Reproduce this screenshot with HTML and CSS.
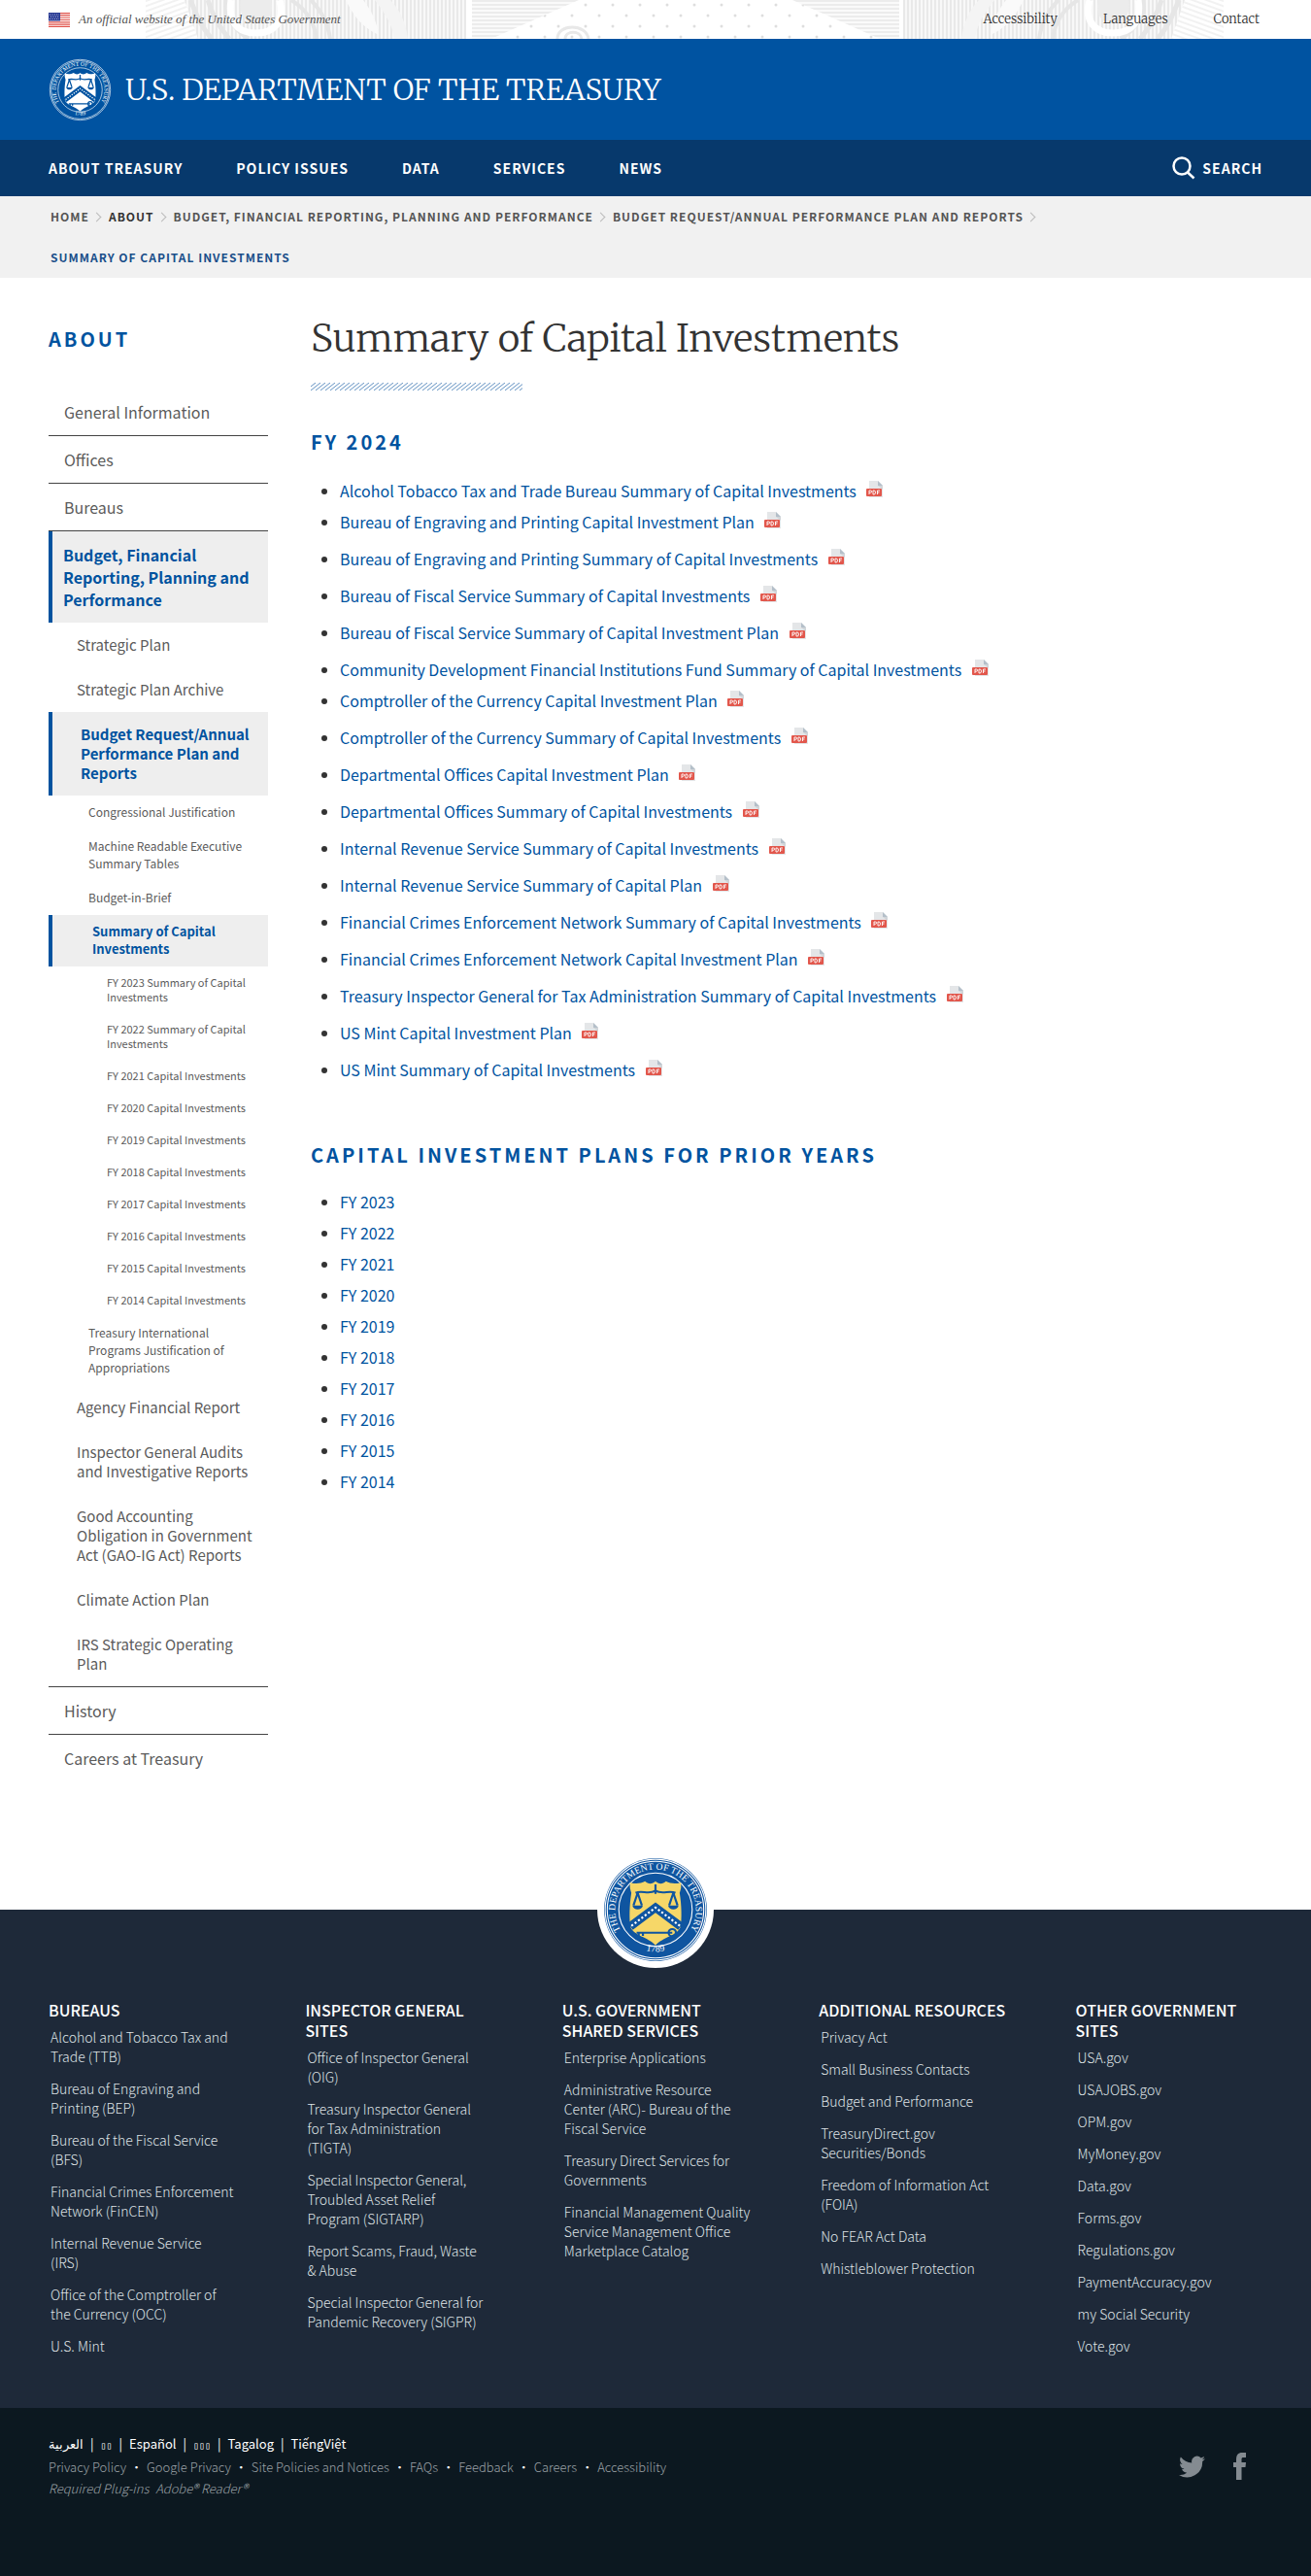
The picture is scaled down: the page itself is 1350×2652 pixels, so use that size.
FILE: index.html
```
<!DOCTYPE html>
<html lang="en">
<head>
<meta charset="utf-8">
<meta name="viewport" content="width=device-width, initial-scale=1">
<title>Summary of Capital Investments | U.S. Department of the Treasury</title>
<link rel="stylesheet" href="styles.css">
</head>
<body>
<svg class="sprite" aria-hidden="true">
  <symbol id="seal-rings" viewBox="0 0 100 100">
    <circle class="seal-disc" cx="50" cy="50" r="49"/>
    <circle class="seal-ring" cx="50" cy="50" r="48"/>
    <circle class="seal-ring" cx="50" cy="50" r="46"/>
    <circle class="seal-ring" cx="50" cy="50" r="35"/>
    <path class="seal-shield" d="M50 23c-3 3-7 3-10 0-4 2-9 3-14 1-1 4 0 7 1 10-2 12-2 25-1 32 3 9 17 10 24 18 7-8 21-9 24-18 1-7 1-20-1-32 1-3 2-6 1-10-5 2-10 1-14-1-3 3-7 3-10 0z"/>
    <path class="seal-mark" d="M50 26v9M31 34c6-3 12 2 19-2 7 4 13-1 19 2M33 34l-4 12M33 34l4 12M67 34l-4 12M67 34l4 12M32 72h34M34 72v4M38 72v3"/>
    <path class="seal-fill" d="M28 46h10c-1 5-9 5-10 0zM62 46h10c-1 5-9 5-10 0z"/>
    <circle class="seal-mark" cx="66" cy="72" r="3.500"/>
    <path class="seal-band" d="M26 66L50 48l24 18"/>
    <path class="seal-stars" d="M27 65.500L50 48l24 18"/>
  </symbol>
  <symbol id="pdf" viewBox="0 0 18 18">
    <path d="M3 0h9l5 5v12H3z" fill="#e4e6e8"/>
    <path d="M12 0l5 5h-5z" fill="#b4bfc9"/>
    <path d="M12 5h5v4z" fill="#d0d4d8"/>
    <rect x="0" y="8" width="16" height="8" rx="1" fill="#e2574c"/>
    <path d="M3 14v-4h1.500a1 1 0 0 1 0 2.200H3M7 10v4h1q1.500 0 1.500-2T8 10zM11.500 14v-4H14M11.500 12h2" fill="none" stroke="#fff" stroke-width=".9"/>
  </symbol>
</svg>

<header>
  <div class="topbar">
    <svg class="engraving" viewBox="0 0 1120 40" preserveAspectRatio="xMidYMid slice" aria-hidden="true">
      <defs>
        <pattern id="v-lines" width="4" height="4" patternUnits="userSpaceOnUse"><path d="M0 0h4v4H0z" fill="#f8f8f8"/><path d="M1 0v4" stroke="#dadada"/></pattern>
        <pattern id="h-lines" width="4" height="4" patternUnits="userSpaceOnUse"><path d="M0 0h4v4H0z" fill="#fafafa"/><path d="M0 1h4" stroke="#dedede"/></pattern>
        <pattern id="d-lines" width="5" height="5" patternUnits="userSpaceOnUse" patternTransform="rotate(-20)"><path d="M0 1h5" stroke="#e4e4e4"/></pattern>
        <pattern id="dots" width="28" height="22" patternUnits="userSpaceOnUse"><circle cx="5" cy="5" r="1.500" fill="#dedede"/><circle cx="19" cy="16" r="1.500" fill="#dedede"/></pattern>
        <g id="scroll">
          <path d="M0 0h40l14 40H0z" fill="url(#d-lines)"/>
          <path d="M40 0h290v40H54z" fill="url(#v-lines)"/>
          <path d="M46 0c6 14 10 26 22 40M64 0c4 14 12 28 22 40M84 0c-6 14 8 30 22 40" fill="none" stroke="#e6e6e6" stroke-width="5"/>
          <path d="M88 0c-4 24 8 34 26 34s30-12 24-34" fill="none" stroke="#fff" stroke-width="7"/>
          <path d="M98 0c-3 16 6 24 16 24s19-8 15-24z" fill="#ececec"/>
          <path d="M150 0c16 10 24 24 26 40M170 0c12 12 18 26 20 40" fill="none" stroke="#e6e6e6" stroke-width="4"/>
          <path d="M206 0c10 20 18 28 34 36-2-14-8-26-16-36z" fill="#fafafa"/>
          <path d="M236 0c12 16 18 26 20 40h14c-2-16-8-30-18-40z" fill="#f4f4f4"/>
        </g>
      </defs>
      <use href="#scroll"/>
      <path d="M336 0h110l-90 40h-20z" fill="url(#h-lines)"/>
      <path d="M446 0h220l90 40H356z" fill="url(#dots)"/>
      <path d="M666 0h110v40h-20z" fill="url(#h-lines)"/>
      <use href="#scroll" transform="translate(1110 0) scale(-1 1)"/>
      <path d="M424 40c0-16 30-16 32 0M432 40c0-9 16-9 17 0" fill="none" stroke="#e8e8e8" stroke-width="3"/>
    </svg>
    <div class="topbar-inner wrap">
      <svg class="flag" viewBox="0 0 22 15" role="img" aria-label="U.S. flag">
        <path fill="#fff" d="M0 0h22v15H0z"/>
        <path stroke="#e0524a" stroke-width="1.150" d="M0 .6h22M0 2.900h22M0 5.200h22M0 7.500h22M0 9.800h22M0 12.100h22M0 14.400h22"/>
        <path fill="#2b3c94" d="M0 0h12v8.500H0z"/>
        <path stroke="#b9c0e4" stroke-dasharray="1 1.400" d="M1 2h10M2 4.200h9M1 6.500h10"/>
      </svg>
      <p class="official">An official website of the United States Government</p>
      <nav class="utility" aria-label="Utility">
        <a href="#">Accessibility</a><a href="#">Languages</a><a href="#">Contact</a>
      </nav>
    </div>
  </div>
  <div class="brand">
    <a class="brand-link wrap" href="#">
      <svg class="brand-seal" viewBox="0 0 100 100" aria-hidden="true">
        <defs>
          <path id="seal-arc" d="M16.500 69.200A38.500 38.500 0 1 1 83.500 69.200"/>
          <path id="seal-base" d="M28 83.600A40 40 0 0 0 72 83.600"/>
        </defs>
        <use href="#seal-rings"/>
        <text class="seal-text"><textPath href="#seal-arc" startOffset="50%" text-anchor="middle">THE DEPARTMENT OF THE TREASURY</textPath></text>
        <text class="seal-text"><textPath href="#seal-base" startOffset="50%" text-anchor="middle">1789</textPath></text>
      </svg>
      <span>U.S. DEPARTMENT OF THE TREASURY</span>
    </a>
  </div>
  <div class="mainnav">
    <div class="mainnav-inner wrap">
      <nav class="menu" aria-label="Main">
        <a href="#">ABOUT TREASURY</a><a href="#">POLICY ISSUES</a><a href="#">DATA</a><a href="#">SERVICES</a><a href="#">NEWS</a>
      </nav>
      <button class="search" type="button">
        <svg viewBox="0 0 24 24" aria-hidden="true"><circle cx="10" cy="10" r="8.500"/><path d="M16 16.500l6.500 6"/></svg>
        SEARCH
      </button>
    </div>
  </div>
  <nav class="crumbs" aria-label="Breadcrumb">
    <ol class="wrap">
      <li><a href="#">HOME</a></li>
      <li><a class="strong" href="#">ABOUT</a></li>
      <li><a href="#">BUDGET, FINANCIAL REPORTING, PLANNING AND PERFORMANCE</a></li>
      <li><a href="#">BUDGET REQUEST/ANNUAL PERFORMANCE PLAN AND REPORTS</a></li>
      <li><a class="current" href="#" aria-current="page">SUMMARY OF CAPITAL INVESTMENTS</a></li>
    </ol>
  </nav>
</header>

<div class="page wrap">
  <aside>
    <h2>ABOUT</h2>
    <ul class="side">
      <li><a href="#">General Information</a></li>
      <li><a href="#">Offices</a></li>
      <li><a href="#">Bureaus</a></li>
      <li><a class="active" href="#">Budget, Financial Reporting, Planning and Performance</a>
        <ul class="side-2">
          <li><a href="#">Strategic Plan</a></li>
          <li><a href="#">Strategic Plan Archive</a></li>
          <li><a class="active" href="#">Budget Request/Annual Performance Plan and Reports</a>
            <ul class="side-3">
              <li><a href="#">Congressional Justification</a></li>
              <li><a href="#">Machine Readable Executive Summary Tables</a></li>
              <li><a href="#">Budget-in-Brief</a></li>
              <li><a class="active" href="#">Summary of Capital Investments</a>
                <ul class="side-4">
                  <li><a href="#">FY 2023 Summary of Capital Investments</a></li>
                  <li><a href="#">FY 2022 Summary of Capital Investments</a></li>
                  <li><a href="#">FY 2021 Capital Investments</a></li>
                  <li><a href="#">FY 2020 Capital Investments</a></li>
                  <li><a href="#">FY 2019 Capital Investments</a></li>
                  <li><a href="#">FY 2018 Capital Investments</a></li>
                  <li><a href="#">FY 2017 Capital Investments</a></li>
                  <li><a href="#">FY 2016 Capital Investments</a></li>
                  <li><a href="#">FY 2015 Capital Investments</a></li>
                  <li><a href="#">FY 2014 Capital Investments</a></li>
                </ul>
              </li>
              <li><a href="#">Treasury International Programs Justification of Appropriations</a></li>
            </ul>
          </li>
          <li><a href="#">Agency Financial Report</a></li>
          <li><a href="#">Inspector General Audits and Investigative Reports</a></li>
          <li><a href="#">Good Accounting Obligation in Government Act (GAO-IG Act) Reports</a></li>
          <li><a href="#">Climate Action Plan</a></li>
          <li><a href="#">IRS Strategic Operating Plan</a></li>
        </ul>
      </li>
      <li><a href="#">History</a></li>
      <li><a href="#">Careers at Treasury</a></li>
    </ul>
  </aside>
  <main>
    <h1>Summary of Capital Investments</h1>
    <svg class="hatch" aria-hidden="true"><defs><pattern id="hatch" width="5" height="8" patternUnits="userSpaceOnUse"><path d="M-5 8L5 0M0 8L10 0" stroke="#5f8fc0" fill="none"/></pattern></defs><rect width="100%" height="100%" fill="url(#hatch)"/></svg>
    <h2>FY 2024</h2>
    <ul class="docs">
      <li class="tight"><a href="#">Alcohol Tobacco Tax and Trade Bureau Summary of Capital Investments <svg aria-label="PDF"><use href="#pdf"/></svg></a></li>
      <li class="tight"><a href="#">Bureau of Engraving and Printing Capital Investment Plan <svg aria-label="PDF"><use href="#pdf"/></svg></a></li>
      <li><a href="#">Bureau of Engraving and Printing Summary of Capital Investments <svg aria-label="PDF"><use href="#pdf"/></svg></a></li>
      <li><a href="#">Bureau of Fiscal Service Summary of Capital Investments <svg aria-label="PDF"><use href="#pdf"/></svg></a></li>
      <li><a href="#">Bureau of Fiscal Service Summary of Capital Investment Plan <svg aria-label="PDF"><use href="#pdf"/></svg></a></li>
      <li><a href="#">Community Development Financial Institutions Fund Summary of Capital Investments <svg aria-label="PDF"><use href="#pdf"/></svg></a></li>
      <li class="tight"><a href="#">Comptroller of the Currency Capital Investment Plan <svg aria-label="PDF"><use href="#pdf"/></svg></a></li>
      <li><a href="#">Comptroller of the Currency Summary of Capital Investments <svg aria-label="PDF"><use href="#pdf"/></svg></a></li>
      <li><a href="#">Departmental Offices Capital Investment Plan <svg aria-label="PDF"><use href="#pdf"/></svg></a></li>
      <li><a href="#">Departmental Offices Summary of Capital Investments <svg aria-label="PDF"><use href="#pdf"/></svg></a></li>
      <li><a href="#">Internal Revenue Service Summary of Capital Investments <svg aria-label="PDF"><use href="#pdf"/></svg></a></li>
      <li><a href="#">Internal Revenue Service Summary of Capital Plan <svg aria-label="PDF"><use href="#pdf"/></svg></a></li>
      <li><a href="#">Financial Crimes Enforcement Network Summary of Capital Investments <svg aria-label="PDF"><use href="#pdf"/></svg></a></li>
      <li><a href="#">Financial Crimes Enforcement Network Capital Investment Plan <svg aria-label="PDF"><use href="#pdf"/></svg></a></li>
      <li><a href="#">Treasury Inspector General for Tax Administration Summary of Capital Investments <svg aria-label="PDF"><use href="#pdf"/></svg></a></li>
      <li><a href="#">US Mint Capital Investment Plan <svg aria-label="PDF"><use href="#pdf"/></svg></a></li>
      <li><a href="#">US Mint Summary of Capital Investments <svg aria-label="PDF"><use href="#pdf"/></svg></a></li>
    </ul>
    <h2>CAPITAL INVESTMENT PLANS FOR PRIOR YEARS</h2>
    <ul class="years">
      <li><a href="#">FY 2023</a></li>
      <li><a href="#">FY 2022</a></li>
      <li><a href="#">FY 2021</a></li>
      <li><a href="#">FY 2020</a></li>
      <li><a href="#">FY 2019</a></li>
      <li><a href="#">FY 2018</a></li>
      <li><a href="#">FY 2017</a></li>
      <li><a href="#">FY 2016</a></li>
      <li><a href="#">FY 2015</a></li>
      <li><a href="#">FY 2014</a></li>
    </ul>
  </main>
</div>

<footer>
  <div class="footer-main">
    <div class="footer-seal">
      <svg viewBox="0 0 100 100" role="img" aria-label="Treasury seal">
        <use href="#seal-rings"/>
        <text class="seal-text"><textPath href="#seal-arc" startOffset="50%" text-anchor="middle">THE DEPARTMENT OF THE TREASURY</textPath></text>
        <text class="seal-text"><textPath href="#seal-base" startOffset="50%" text-anchor="middle">1789</textPath></text>
      </svg>
    </div>
    <div class="footer-cols wrap">
      <section><h3>BUREAUS</h3>
        <ul>
          <li><a href="#">Alcohol and Tobacco Tax and Trade (TTB)</a></li>
          <li><a href="#">Bureau of Engraving and Printing (BEP)</a></li>
          <li><a href="#">Bureau of the Fiscal Service (BFS)</a></li>
          <li><a href="#">Financial Crimes Enforcement Network (FinCEN)</a></li>
          <li><a href="#">Internal Revenue Service<br>(IRS)</a></li>
          <li><a href="#">Office of the Comptroller of the Currency (OCC)</a></li>
          <li><a href="#">U.S. Mint</a></li>
        </ul></section>
      <section><h3>INSPECTOR GENERAL SITES</h3>
        <ul>
          <li><a href="#">Office of Inspector General (OIG)</a></li>
          <li><a href="#">Treasury Inspector General for&nbsp;Tax Administration<br>(TIGTA)</a></li>
          <li><a href="#">Special Inspector General, Troubled Asset Relief Program&nbsp;(SIGTARP)</a></li>
          <li><a href="#">Report Scams, Fraud, Waste &amp;&nbsp;Abuse</a></li>
          <li><a href="#">Special Inspector General for Pandemic Recovery (SIGPR)</a></li>
        </ul></section>
      <section><h3>U.S. GOVERNMENT SHARED SERVICES</h3>
        <ul>
          <li><a href="#">Enterprise Applications</a></li>
          <li><a href="#">Administrative Resource Center (ARC)- Bureau of the Fiscal Service</a></li>
          <li><a href="#">Treasury Direct Services for Governments</a></li>
          <li><a href="#"><span class="nowrap">Financial Management Quality</span> Service Management Office Marketplace Catalog</a></li>
        </ul></section>
      <section><h3>ADDITIONAL RESOURCES</h3>
        <ul>
          <li><a href="#">Privacy Act</a></li>
          <li><a href="#">Small Business Contacts</a></li>
          <li><a href="#">Budget and Performance</a></li>
          <li><a href="#">TreasuryDirect.gov Securities/Bonds</a></li>
          <li><a href="#">Freedom of Information Act (FOIA)</a></li>
          <li><a href="#">No FEAR Act Data</a></li>
          <li><a href="#">Whistleblower Protection</a></li>
        </ul></section>
      <section><h3>OTHER GOVERNMENT SITES</h3>
        <ul>
          <li><a href="#">USA.gov</a></li>
          <li><a href="#">USAJOBS.gov</a></li>
          <li><a href="#">OPM.gov</a></li>
          <li><a href="#">MyMoney.gov</a></li>
          <li><a href="#">Data.gov</a></li>
          <li><a href="#">Forms.gov</a></li>
          <li><a href="#">Regulations.gov</a></li>
          <li><a href="#">PaymentAccuracy.gov</a></li>
          <li><a href="#">my Social Security</a></li>
          <li><a href="#">Vote.gov</a></li>
        </ul></section>
    </div>
  </div>
  <div class="footer-base">
    <div class="footer-base-inner wrap">
      <div>
        <ul class="langs">
          <li><a href="#" lang="ar">العربية</a></li>
          <li><a class="boxes" href="#">▯▯</a></li>
          <li><a href="#" lang="es">Español</a></li>
          <li><a class="boxes" href="#">▯▯▯</a></li>
          <li><a href="#" lang="tl">Tagalog</a></li>
          <li><a href="#" lang="vi">TiếngViệt</a></li>
        </ul>
        <ul class="policies">
          <li><a href="#">Privacy Policy</a></li>
          <li><a href="#">Google Privacy</a></li>
          <li><a href="#">Site Policies and Notices</a></li>
          <li><a href="#">FAQs</a></li>
          <li><a href="#">Feedback</a></li>
          <li><a href="#">Careers</a></li>
          <li><a href="#">Accessibility</a></li>
        </ul>
        <p class="plugins"><span>Required Plug-ins</span> <a href="#">Adobe® Reader®</a></p>
      </div>
      <div class="social">
        <a href="#" aria-label="Twitter"><svg class="twitter" viewBox="0 0 24 24"><path d="M24 4.600a10 10 0 0 1-2.800.8 5 5 0 0 0 2.100-2.700c-1 .6-2 1-3.100 1.200a4.900 4.900 0 0 0-8.400 4.500A14 14 0 0 1 1.700 3.100a4.900 4.900 0 0 0 1.500 6.600 5 5 0 0 1-2.200-.6 4.900 4.900 0 0 0 3.900 4.900 5 5 0 0 1-2.200.1 4.900 4.900 0 0 0 4.600 3.400A9.900 9.900 0 0 1 0 19.500a14 14 0 0 0 21.500-12.400A10 10 0 0 0 24 4.600z"/></svg></a>
        <a href="#" aria-label="Facebook"><svg class="facebook" viewBox="0 0 13 28"><path d="M3 28V15H0v-5h3V7c0-4.500 2-7 6-7h4v5h-2.500C9 5 8.500 5.600 8.500 7v3H13l-.5 5h-4v13z"/></svg></a>
      </div>
    </div>
  </div>
</footer>
</body>
</html>
```
FILE: styles.css
```
:root {
  --sans: "Noto Sans CJK SC", "Noto Sans", sans-serif;
  --serif: "Merriweather", "Liberation Serif", serif;
  --blue: #0053a1;
  --navy: #07396c;
  --link: #00539f;
}

* { box-sizing: border-box; }

body {
  margin: 0;
  background: #fff;
  color: #333;
  font: 16px/32px var(--sans);
}

a { color: inherit; text-decoration: none; }
a:hover { text-decoration: underline; }
ul, ol { margin: 0; padding: 0; list-style: none; }
p, h1, h2, h3 { margin: 0; }

.wrap { padding-left: 50px; padding-right: 50px; }
.nowrap { white-space: nowrap; }
.sprite { position: absolute; width: 0; height: 0; }

/* Seal */
.seal-disc { fill: var(--seal-disc); }
.seal-ring { fill: none; stroke: #fff; stroke-width: 1; }
.seal-text { fill: #fff; font: 9px "Liberation Serif", serif; }
.seal-shield { fill: var(--seal-shield); }
.seal-mark { fill: none; stroke: var(--seal-disc); stroke-width: 2; }
.seal-fill { fill: var(--seal-disc); }
.seal-band { fill: none; stroke: var(--seal-disc); stroke-width: 8; }
.seal-stars { fill: none; stroke: #fff; stroke-width: 2; stroke-dasharray: 2 2; }

/* Top bar */
.topbar { position: relative; height: 40px; overflow: hidden; }
.engraving { position: absolute; top: 0; left: 150px; width: calc(100% - 230px); height: 40px; }
.topbar-inner { position: relative; display: flex; align-items: center; height: 40px; }
.flag { width: 22px; height: 15px; margin-right: 9px; }
.official { color: #555; font: italic 13px/20px "Liberation Serif", serif; }
.utility { display: flex; gap: 47px; margin-left: auto; padding-right: 3px; color: #333; font: 300 13px/20px var(--serif); }

/* Brand and main menu */
.brand { background: var(--blue); }
.brand-link { display: flex; align-items: center; gap: 14px; height: 104px; color: #fff; font: 300 30px/40px var(--serif); }
.brand-link:hover { text-decoration: none; }
.brand-seal { --seal-disc: #0053a1; --seal-shield: #fff; width: 65px; height: 65px; }
.mainnav { background: var(--navy); color: #fff; }
.mainnav-inner { display: flex; align-items: center; justify-content: space-between; height: 58px; }
.menu { display: flex; flex-wrap: wrap; gap: 55px; font-size: 14px; font-weight: 700; letter-spacing: 1px; }
.search { display: flex; align-items: center; gap: 7px; border: 0; padding: 0; background: none; color: #fff; font: inherit; font-size: 14px; font-weight: 700; letter-spacing: 1px; }
.search svg { width: 24px; height: 24px; fill: none; stroke: #fff; stroke-width: 2.5px; }

/* Breadcrumb */
.crumbs { background: #f1f1f1; }
.crumbs ol { display: flex; flex-wrap: wrap; column-gap: 9px; color: #555; font-size: 12px; font-weight: 700; line-height: 42px; letter-spacing: 1px; padding-left: 52px; }
.crumbs li { display: flex; align-items: center; gap: 4px; }
.crumbs li:not(:last-child)::after { content: ""; width: 6px; height: 6px; border: solid #bbb; border-width: 1px 1px 0 0; transform: rotate(45deg); }
.crumbs .strong { color: #333; }
.crumbs .current { color: #1a4f8a; }

/* Page columns */
.page { display: grid; grid-template-columns: 226px minmax(0, 1fr); gap: 44px; padding-top: 35px; padding-bottom: 132px; }
h2 { color: var(--link); font-size: 20px; font-weight: 700; letter-spacing: 3px; line-height: 32px; }
aside h2 { margin: 12px 0 35px; }

/* Section menu */
.side { color: #5b5b5b; }
.side a { display: block; }
.side > li + li { border-top: 1px solid #444; }
.side > li > a { padding: 13px 10px 12px 16px; line-height: 23px; }
.side-2 { font-size: 15px; line-height: 20px; }
.side-2 > li > a { padding: 13px 10px 13px 29px; }
.side-3 { font-size: 12px; line-height: 18px; }
.side-3 > li > a { padding: 8px 20px 9px 41px; }
.side-4 { font-size: 11px; line-height: 15px; }
.side-4 > li > a { padding: 9px 10px 9px 60px; }
.side .active { border-left: 4px solid var(--link); background: #eee; color: var(--link); font-weight: 700; }
.side > li > .active { padding-left: 11px; }
.side-3 > li > .active { padding-right: 40px; font-size: 13px; }

/* Main content */
h1 { color: #333; font: 300 39px/56px var(--serif); }
.hatch { display: block; width: 218px; height: 8px; margin: 17px 0 37px; }
.docs, .years { padding-left: 30px; color: #333; list-style: disc; }
.docs { margin: 18px 0 56px; }
.years { margin-top: 16px; }
.docs a, .years a { color: var(--link); }
.docs li + li:not(.tight) { margin-top: 6px; }
.docs svg { width: 18px; height: 18px; margin-left: 7px; vertical-align: -1px; }

/* Footer */
.footer-main { padding: 1px 0 54px; background: #1e2939; color: #fff; }
.footer-seal { display: flex; justify-content: center; align-items: center; width: 120px; height: 120px; margin: -61px auto 0; border-radius: 50%; background: #fff; }
.footer-seal svg { --seal-disc: #0f55a0; --seal-shield: #f6d768; width: 108px; height: 108px; }
.footer-cols { display: grid; grid-template-columns: repeat(5, minmax(0, 1fr)); gap: 72px; padding-top: 33px; }
.footer-cols h3 { font-size: 16px; font-weight: 500; line-height: 21px; }
.footer-cols ul { display: grid; gap: 13px; padding: 7px 0 0 2px; color: #dfe3e6; font-size: 14px; font-weight: 300; line-height: 20px; }
.footer-base { background: #0c1820; color: #9ba1a6; }
.footer-base-inner { display: flex; justify-content: space-between; padding-top: 26px; padding-bottom: 80px; font-size: 13px; font-weight: 300; line-height: 22px; }
.langs, .policies { display: flex; flex-wrap: wrap; }
.langs { color: #fff; font-weight: 400; }
.langs li + li::before { content: "|"; margin: 0 7px; }
.policies li + li::before { content: "•"; margin: 0 4px; color: #fff; }
.boxes { font-family: "DejaVu Sans Mono", monospace; font-size: 10px; }
.plugins { font-style: italic; }
.plugins span { margin-right: 4px; }
.social { display: flex; align-items: center; gap: 29px; height: 68px; padding-right: 17px; }
.social a { display: flex; }
.social svg { fill: #848b91; }
.twitter { width: 27px; height: 27px; }
.facebook { width: 13px; height: 28px; }
```
